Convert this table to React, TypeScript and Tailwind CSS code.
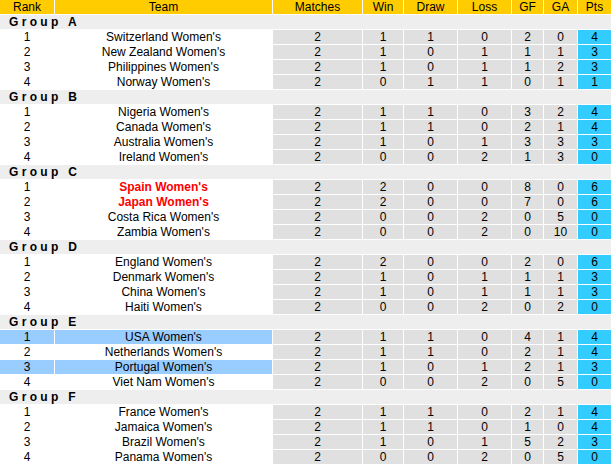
import React from "react";

type Row = [string, string, number, number, number, number, number, number, number, ("red" | "hl" | "")?];

const groups: { name: string; rows: Row[] }[] = [
  {
    name: "A",
    rows: [
      ["1", "Switzerland Women's", 2, 1, 1, 0, 2, 0, 4],
      ["2", "New Zealand Women's", 2, 1, 0, 1, 1, 1, 3],
      ["3", "Philippines Women's", 2, 1, 0, 1, 1, 2, 3],
      ["4", "Norway Women's", 2, 0, 1, 1, 0, 1, 1],
    ],
  },
  {
    name: "B",
    rows: [
      ["1", "Nigeria Women's", 2, 1, 1, 0, 3, 2, 4],
      ["2", "Canada Women's", 2, 1, 1, 0, 2, 1, 4],
      ["3", "Australia Women's", 2, 1, 0, 1, 3, 3, 3],
      ["4", "Ireland Women's", 2, 0, 0, 2, 1, 3, 0],
    ],
  },
  {
    name: "C",
    rows: [
      ["1", "Spain Women's", 2, 2, 0, 0, 8, 0, 6, "red"],
      ["2", "Japan Women's", 2, 2, 0, 0, 7, 0, 6, "red"],
      ["3", "Costa Rica Women's", 2, 0, 0, 2, 0, 5, 0],
      ["4", "Zambia Women's", 2, 0, 0, 2, 0, 10, 0],
    ],
  },
  {
    name: "D",
    rows: [
      ["1", "England Women's", 2, 2, 0, 0, 2, 0, 6],
      ["2", "Denmark Women's", 2, 1, 0, 1, 1, 1, 3],
      ["3", "China Women's", 2, 1, 0, 1, 1, 1, 3],
      ["4", "Haiti Women's", 2, 0, 0, 2, 0, 2, 0],
    ],
  },
  {
    name: "E",
    rows: [
      ["1", "USA Women's", 2, 1, 1, 0, 4, 1, 4, "hl"],
      ["2", "Netherlands Women's", 2, 1, 1, 0, 2, 1, 4],
      ["3", "Portugal Women's", 2, 1, 0, 1, 2, 1, 3, "hl"],
      ["4", "Viet Nam Women's", 2, 0, 0, 2, 0, 5, 0],
    ],
  },
  {
    name: "F",
    rows: [
      ["1", "France Women's", 2, 1, 1, 0, 2, 1, 4],
      ["2", "Jamaica Women's", 2, 1, 1, 0, 1, 0, 4],
      ["3", "Brazil Women's", 2, 1, 0, 1, 5, 2, 3],
      ["4", "Panama Women's", 2, 0, 0, 2, 0, 5, 0],
    ],
  },
];

const headers = ["Rank", "Team", "Matches", "Win", "Draw", "Loss", "GF", "GA", "Pts"];

export default function App() {
  return (
    <div
      className="w-[611px] h-[464px] bg-white text-[12px] leading-[14px] text-black overflow-hidden"
      style={{ fontFamily: '"Liberation Sans", Arial, sans-serif' }}
    >
      <div className="grid grid-cols-[54px_217px_89px_40px_53px_53px_31px_33px_33px] auto-rows-[14px] gap-px bg-white">
        {headers.map((h) => (
          <div key={h} className="bg-[#ffcc00] text-center">
            {h}
          </div>
        ))}
        {groups.map((g) => (
          <React.Fragment key={g.name}>
            <div className="col-span-9 bg-[#eeeeee] pl-[9px] font-bold whitespace-pre">
              {`G r o u p   ${g.name}`}
            </div>
            {g.rows.map((r) => {
              const flag = r[9] || "";
              const hl = flag === "hl";
              const red = flag === "red";
              return (
                <React.Fragment key={r[1]}>
                  <div className={`text-center ${hl ? "bg-[#99ccff]" : "bg-white"}`}>{r[0]}</div>
                  <div
                    className={`text-center ${hl ? "bg-[#99ccff]" : "bg-white"} ${
                      red ? "text-[#ff0000] font-bold" : ""
                    }`}
                  >
                    {r[1]}
                  </div>
                  {[r[2], r[3], r[4], r[5], r[6], r[7]].map((v, i) => (
                    <div key={i} className="bg-[#e0e0e0] text-center">
                      {v}
                    </div>
                  ))}
                  <div className="bg-[#33ccff] text-center">{r[8]}</div>
                </React.Fragment>
              );
            })}
          </React.Fragment>
        ))}
      </div>
    </div>
  );
}
